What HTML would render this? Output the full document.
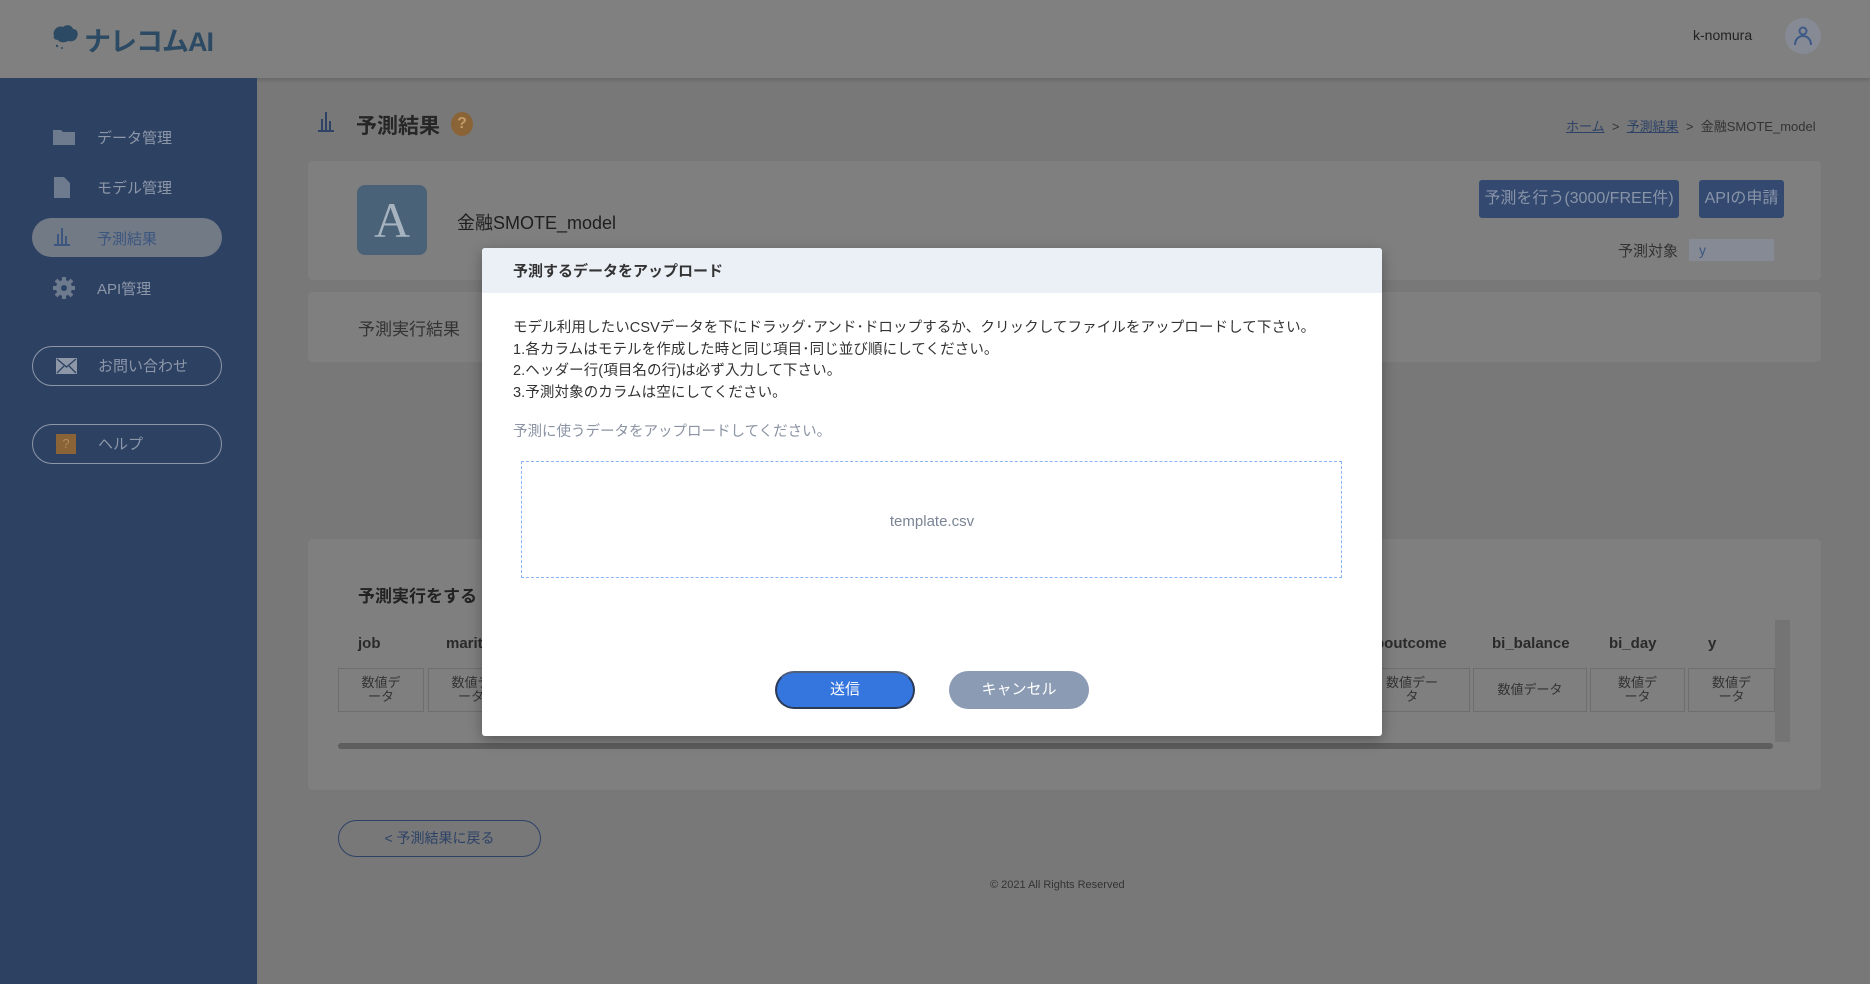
<!DOCTYPE html>
<html><head><meta charset="utf-8"><style>
*{margin:0;padding:0;box-sizing:border-box}
body{width:1870px;height:984px;overflow:hidden;background:#787878;font-family:"Liberation Sans","Noto Sans CJK JP",sans-serif;position:relative;color:#1e1e1e}
.a{position:absolute}
.hdr{left:0;top:0;width:1870px;height:78px;background:#808080;box-shadow:0 2px 4px rgba(0,0,0,.15)}
.side{left:0;top:78px;width:257px;height:906px;background:#2d4163}
.nav{color:#8d97a8;font-size:15px}
.pill{border:1px solid #8d97a8;border-radius:20px;color:#8d97a8;font-size:15px}
.card{background:#7f7f7f;border-radius:4px}
.cell{background:#7f7f7f;border:1px solid #6e6e6e;font-size:13px;color:#333;line-height:14px;padding:7px 0 0 0;text-align:center}
.col{font-size:15px;font-weight:bold;color:#2a2a2a}
</style></head><body>
<div class="a hdr"></div>
<div class="a" style="left:50px;top:22px;width:30px;height:28px">
<svg width="30" height="28" viewBox="0 0 30 28"><path d="M4 14c-2-6 4-11 9-9 3-3 9-2 10 2 4 0 6 4 4 8-1 4-6 5-9 4-3 2-8 2-10-1-3 0-5-2-4-4z" fill="#2c4a63"/><circle cx="7" cy="24" r="1.2" fill="#2c4a63"/><circle cx="12" cy="26" r="1" fill="#2c4a63"/></svg></div>
<div class="a" style="left:84px;top:20px;font-size:27px;font-weight:bold;color:#2c4a63;letter-spacing:-1px">ナレコムAI</div>
<div class="a" style="left:1693px;top:27px;font-size:14px;color:#222">k-nomura</div>
<div class="a" style="left:1785px;top:18px;width:36px;height:36px;border-radius:50%;background:#858a94"><svg width="36" height="36" viewBox="0 0 36 36"><circle cx="18" cy="13" r="3.5" fill="none" stroke="#3e5a86" stroke-width="2"/><path d="M10 27c0-6 4-9 8-9s8 3 8 9" fill="none" stroke="#3e5a86" stroke-width="2"/></svg></div>

<div class="a side"></div>
<svg class="a" style="left:53px;top:128px" width="22" height="17" viewBox="0 0 22 17"><path d="M0 2h8l2 2h12v13H0z" fill="#6e7a8e"/></svg>
<div class="a nav" style="left:97px;top:127px">データ管理</div>
<svg class="a" style="left:54px;top:177px" width="16" height="21" viewBox="0 0 16 21"><path d="M0 0h10l6 6v15H0z" fill="#6e7a8e"/></svg>
<div class="a nav" style="left:97px;top:177px">モデル管理</div>
<div class="a" style="left:32px;top:218px;width:190px;height:39px;border-radius:20px;background:#727a86"></div>
<div class="a" style="left:54px;top:228px;width:16px;height:18px;border-bottom:2px solid #3d5680"><div class="a" style="left:3px;top:6px;width:2px;height:10px;background:#3d5680"></div><div class="a" style="left:7px;top:0;width:2px;height:16px;background:#3d5680"></div><div class="a" style="left:11px;top:8px;width:2px;height:8px;background:#3d5680"></div></div>
<div class="a" style="left:97px;top:228px;font-size:15px;color:#3d5680">予測結果</div>
<svg class="a" style="left:53px;top:277px" width="22" height="22" viewBox="0 0 22 22"><circle cx="11" cy="11" r="8" fill="#6e7a8e"/><g stroke="#6e7a8e" stroke-width="4"><path d="M11 0v22M0 11h22M3 3l16 16M19 3L3 19"/></g><circle cx="11" cy="11" r="3" fill="#2d4163"/></svg>
<div class="a nav" style="left:97px;top:278px">API管理</div>
<div class="a pill" style="left:32px;top:346px;width:190px;height:40px"></div>
<svg class="a" style="left:56px;top:358px" width="21" height="16" viewBox="0 0 21 16"><rect width="21" height="16" fill="#8d97a8"/><path d="M1 1l9.5 8L20 1M1 15l7-7M20 15l-7-7" stroke="#2d4163" stroke-width="1.3" fill="none"/></svg>
<div class="a nav" style="left:98px;top:355px">お問い合わせ</div>
<div class="a pill" style="left:32px;top:424px;width:190px;height:40px"></div>
<div class="a" style="left:56px;top:434px;width:20px;height:20px;background:#8a6437;color:#b08a5c;font-size:13px;text-align:center;line-height:20px">?</div>
<div class="a nav" style="left:98px;top:433px">ヘルプ</div>

<div class="a" style="left:318px;top:112px;width:16px;height:20px;border-bottom:2px solid #2d4266"><div class="a" style="left:3px;top:7px;width:2px;height:11px;background:#2d4266"></div><div class="a" style="left:7px;top:0;width:2px;height:18px;background:#2d4266"></div><div class="a" style="left:11px;top:9px;width:2px;height:9px;background:#2d4266"></div></div>
<div class="a" style="left:356px;top:110px;font-size:21px;font-weight:bold;color:#262626">予測結果</div>
<div class="a" style="left:451px;top:112px;width:22px;height:24px;border-radius:50%;background:#8a6437;color:#c49a65;font-size:16px;text-align:center;line-height:24px;font-weight:bold">?</div>
<div class="a" style="left:1566px;top:116px;font-size:13px;color:#333"><span style="color:#2d4266;text-decoration:underline">ホーム</span>&nbsp; &gt; &nbsp;<span style="color:#2d4266;text-decoration:underline">予測結果</span>&nbsp; &gt; &nbsp;<span>金融SMOTE_model</span></div>

<div class="a card" style="left:308px;top:161px;width:1513px;height:119px"></div>
<div class="a" style="left:357px;top:185px;width:70px;height:70px;border-radius:8px;background:#4a6278;color:#a7b4c0;font-family:'Liberation Serif',serif;font-size:50px;text-align:center;line-height:70px">A</div>
<div class="a" style="left:457px;top:209px;font-size:18px;color:#1e1e1e">金融SMOTE_model</div>
<div class="a" style="left:1479px;top:180px;width:200px;height:38px;border-radius:3px;background:#34496f;color:#8894a8;font-size:16px;text-align:center;line-height:38px">予測を行う(3000/FREE件)</div>
<div class="a" style="left:1699px;top:180px;width:85px;height:38px;border-radius:3px;background:#34496f;color:#8894a8;font-size:16px;text-align:center;line-height:38px">APIの申請</div>
<div class="a" style="left:1618px;top:240px;font-size:15px;color:#333">予測対象</div>
<div class="a" style="left:1689px;top:239px;width:85px;height:22px;background:#858a94;color:#3d5680;font-size:14px;padding-left:10px;line-height:22px">y</div>

<div class="a card" style="left:308px;top:292px;width:1513px;height:70px"></div>
<div class="a" style="left:358px;top:315px;font-size:17px;color:#333">予測実行結果</div>

<div class="a card" style="left:308px;top:539px;width:1513px;height:251px"></div>
<div class="a" style="left:358px;top:582px;font-size:17px;font-weight:bold;color:#222">予測実行をする</div>
<div class="a col" style="left:358px;top:635px">job</div>
<div class="a col" style="left:446px;top:635px">marit</div>
<div class="a col" style="left:1375px;top:635px">poutcome</div>
<div class="a col" style="left:1492px;top:635px">bi_balance</div>
<div class="a col" style="left:1609px;top:635px">bi_day</div>
<div class="a col" style="left:1708px;top:635px">y</div>
<div class="a cell" style="left:338px;top:668px;width:86px;height:44px">数値デ<br>ータ</div>
<div class="a cell" style="left:428px;top:668px;width:86px;height:44px">数値デ<br>ータ</div>
<div class="a cell" style="left:1354px;top:668px;width:116px;height:44px">数値デー<br>タ</div>
<div class="a cell" style="left:1473px;top:668px;width:114px;height:44px;padding-top:14px">数値データ</div>
<div class="a cell" style="left:1590px;top:668px;width:95px;height:44px">数値デ<br>ータ</div>
<div class="a cell" style="left:1688px;top:668px;width:87px;height:44px">数値デ<br>ータ</div>
<div class="a" style="left:1775px;top:620px;width:15px;height:122px;background:#747474"></div>
<div class="a" style="left:338px;top:743px;width:1435px;height:6px;background:#5e5e5e;border-radius:3px"></div>

<div class="a" style="left:338px;top:820px;width:203px;height:37px;border:1px solid #2d4266;border-radius:19px;color:#2d4266;font-size:14px;text-align:center;line-height:35px">&lt; 予測結果に戻る</div>
<div class="a" style="left:990px;top:879px;font-size:11px;color:#333">© 2021 All Rights Reserved</div>

<div class="a" style="left:482px;top:248px;width:900px;height:488px;background:#fff;border-radius:3px;box-shadow:0 4px 14px rgba(0,0,0,.3);overflow:hidden">
<div class="a" style="left:0;top:0;width:900px;height:45px;background:#ebf0f7"></div>
<div class="a" style="left:31px;top:12px;font-size:15px;font-weight:bold;color:#333">予測するデータをアップロード</div>
<div class="a" style="left:31px;top:70px;font-size:14.5px;line-height:21.5px;color:#333;letter-spacing:0.1px">モデル利用したいCSVデータを下にドラッグ･アンド･ドロップするか、クリックしてファイルをアップロードして下さい。<br>1.各カラムはモテルを作成した時と同じ項目･同じ並び順にしてください。<br>2.ヘッダー行(項目名の行)は必ず入力して下さい。<br>3.予測対象のカラムは空にしてください。</div>
<div class="a" style="left:31px;top:172px;font-size:14.5px;color:#8a93a3">予測に使うデータをアップロードしてください。</div>
<div class="a" style="left:39px;top:213px;width:821px;height:117px;border:1px dashed #8ab4f8"></div>
<div class="a" style="left:0;top:265px;width:900px;text-align:center;font-size:15px;color:#7a8494">template.csv</div>
<div class="a" style="left:293px;top:423px;width:140px;height:38px;border-radius:19px;background:#3575de;border:2px solid #2b3a55;border-top-color:#4f5f7e;color:#fff;font-size:15px;text-align:center;line-height:34px">送信</div>
<div class="a" style="left:467px;top:423px;width:140px;height:38px;border-radius:19px;background:#8a9bb3;color:#fff;font-size:15px;text-align:center;line-height:38px">キャンセル</div>
</div>
</body></html>
